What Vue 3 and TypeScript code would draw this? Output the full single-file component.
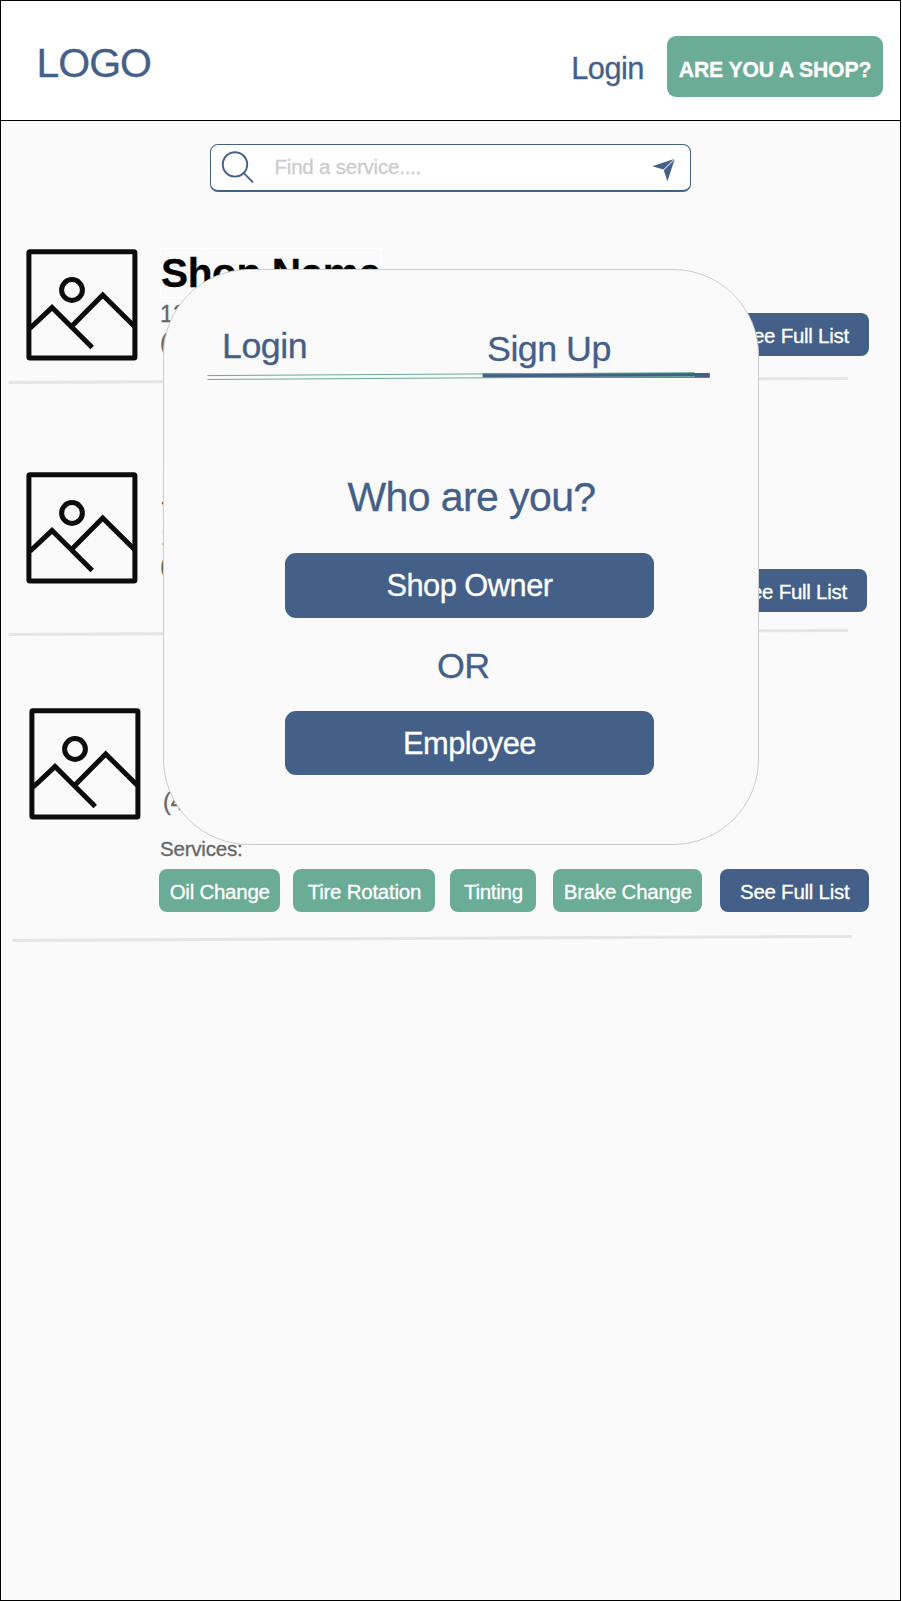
<script setup lang="ts">
interface Shop {
  id: string
  name: string
  address: string
  phone: string
  services: string[]
  listInHeader: boolean
}

const shops: Shop[] = [
  { id: 'first', name: 'Shop Name', address: '123 Main St', phone: '(408)', services: [], listInHeader: true },
  { id: 'second', name: 'Shop Name', address: '123 Main St', phone: '(408)', services: [], listInHeader: true },
  {
    id: 'third',
    name: 'Shop Name',
    address: '123 Main St',
    phone: '(408)',
    services: ['Oil Change', 'Tire Rotation', 'Tinting', 'Brake Change'],
    listInHeader: false,
  },
]
</script>

<template>
  <div class="page">
    <header class="header">
      <div class="logo">LOGO</div>
      <nav class="nav">
        <a class="nav-login">Login</a>
        <button class="shop-cta">ARE YOU A SHOP?</button>
      </nav>
    </header>

    <div class="search">
      <svg class="search-icon" width="34" height="34" viewBox="0 0 34 34">
        <circle cx="14" cy="14.4" r="12.2" />
        <path d="M22.8 23.2L32 32.4" />
      </svg>
      <span class="placeholder">Find a service....</span>
      <svg class="send-icon" width="24" height="24" viewBox="0 0 24 24">
        <path d="M0.3 8.2L22 1L11.4 11.6Z" />
        <path d="M22.6 1.4L15.4 23.2L11.8 12.2Z" />
      </svg>
    </div>

    <main class="list">
      <section v-for="shop in shops" :key="shop.id" class="shop" :class="shop.id">
        <div class="body">
          <svg class="thumb" width="112" height="112" viewBox="0 0 112 112">
            <rect x="2.9" y="2.7" width="106" height="106.3" rx="1" />
            <circle cx="46" cy="41" r="10.4" />
            <path d="M4 79.3L26 58.6L66.2 98.6" />
            <path d="M46 77L76.7 46L109 78" />
          </svg>
          <div class="info">
            <h2 class="name">{{ shop.name }}</h2>
            <p class="line address">{{ shop.address }}</p>
            <p class="line">{{ shop.phone }}</p>
            <template v-if="shop.services.length">
              <p class="services-label">Services:</p>
              <div class="services">
                <span v-for="(service, i) in shop.services" :key="service" class="chip" :class="'chip-' + i">{{ service }}</span>
                <button class="full-list">See Full List</button>
              </div>
            </template>
          </div>
          <button v-if="shop.listInHeader" class="full-list aside">See Full List</button>
        </div>
        <svg class="divider" width="840" height="8" viewBox="0 0 840 8">
          <path d="M0.5 5.4L840 1.4" />
        </svg>
      </section>
    </main>

    <div class="modal">
      <div class="tabs">
        <span class="tab">Login</span>
        <span class="tab active">Sign Up</span>
      </div>
      <svg class="tab-lines" width="504" height="10" viewBox="0 0 504 10">
        <rect class="marker" x="275.6" y="2" width="227.2" height="4.8" />
        <path class="rail" d="M0.5 4.6L487.8 1.6" />
        <path class="rail" d="M0.5 8.5L487.8 5.5" />
      </svg>
      <h1 class="question">Who are you?</h1>
      <button class="choice">Shop Owner</button>
      <div class="or">OR</div>
      <button class="choice">Employee</button>
    </div>
  </div>
</template>

<style>
body {
  margin: 0;
  background: #fff;
}
</style>

<style scoped>
.page {
  position: relative;
  box-sizing: border-box;
  width: 901px;
  height: 1601px;
  border: 1px solid #000;
  background: #fafafa;
  font-family: "Liberation Sans", Arial, sans-serif;
  -webkit-text-stroke: 0.3px currentColor;
  overflow: hidden;
}

button {
  display: block;
  padding: 0;
  border: 0;
  font-family: inherit;
  color: #fff;
  white-space: nowrap;
  -webkit-text-stroke: 0.3px currentColor;
}

.header {
  display: flex;
  justify-content: space-between;
  box-sizing: border-box;
  height: 120px;
  padding: 35px 17px 0 35.5px;
  border-bottom: 1px solid #000;
  background: #fff;
  color: #446088;
}

.logo {
  font-size: 41px;
  line-height: 54px;
  letter-spacing: -1px;
}

.nav {
  display: flex;
  gap: 23px;
}

.nav-login {
  font-size: 30.8px;
  line-height: 66px;
  letter-spacing: -0.5px;
}

.shop-cta {
  width: 216px;
  height: 61px;
  padding-top: 6px;
  border-radius: 9px;
  background: #6aac96;
  font-size: 21.2px;
  font-weight: 700;
  letter-spacing: -0.15px;
}

.search {
  display: flex;
  box-sizing: border-box;
  width: 481px;
  height: 48px;
  margin: 23px 0 0 209px;
  padding: 0 14px 0 10px;
  border: 1px solid #446088;
  border-bottom-width: 2px;
  border-radius: 8px;
  background: #fff;
}

.search-icon {
  margin-top: 5px;
  fill: none;
  stroke: #446088;
  stroke-width: 1.9;
}

.placeholder {
  flex: 1;
  margin-left: 19.5px;
  color: #ccc;
  font-size: 20.6px;
  line-height: 44px;
  letter-spacing: -0.25px;
}

.send-icon {
  margin-top: 13px;
  fill: #446088;
}

.list {
  margin-top: 56px;
}

.body {
  display: flex;
}

.thumb {
  flex: none;
  margin: 1px 0 0 25px;
  fill: none;
  stroke: #0c0c0c;
  stroke-width: 5;
}

.info {
  width: 711px;
  margin-left: 22px;
}

.name {
  box-sizing: border-box;
  width: 222px;
  height: 50px;
  margin: 0;
  border: 1px solid #fff;
  color: #000;
  font-size: 40.6px;
  line-height: 49px;
  letter-spacing: -0.4px;
  white-space: nowrap;
}

.line {
  margin: 0;
  padding-top: 1px;
  color: #666;
  font-size: 23.5px;
  line-height: 29px;
}

.address {
  position: relative;
  top: 1px;
}

.second .address {
  padding-left: 1px;
}

.third .address {
  padding-left: 5px;
}

.divider {
  display: block;
  margin-left: 7px;
  fill: none;
  stroke: #e5e5e5;
  stroke-width: 3;
}

.full-list,
.chip {
  flex: none;
  height: 43.4px;
  border-radius: 8px;
  color: #fff;
  font-size: 20.5px;
  line-height: 46px;
  letter-spacing: -0.25px;
  text-align: center;
  white-space: nowrap;
}

.full-list {
  width: 149.5px;
  background: #446088;
}

.aside {
  margin-left: -151.5px;
}

.first .aside {
  margin-top: 65px;
}

.second .aside {
  margin-top: 98px;
  margin-left: -153.5px;
}

.first {
  height: 223px;
}

.first .body {
  height: 129px;
}

.second .body {
  height: 158px;
}

.second {
  height: 236px;
}

.third .body {
  height: 228px;
}

.third .thumb {
  margin-left: 28px;
}

.third .info {
  margin-left: 19px;
}

.third .name,
.third .line {
  margin-left: 3px;
}

.third .divider {
  margin-left: 11px;
}

.services-label {
  margin: 20px 0 0;
  color: #666;
  font-size: 20.6px;
  line-height: 24px;
  letter-spacing: -0.25px;
}

.services {
  display: flex;
  margin: 8px 0 0 -1px;
}

.chip {
  background: #6aac96;
}

.chip-0 {
  width: 121.4px;
  margin-right: 13px;
}

.chip-1 {
  width: 142px;
  margin-right: 15px;
}

.chip-2 {
  width: 86px;
  margin-right: 17px;
}

.chip-3 {
  width: 149px;
  margin-right: 17.6px;
}

.modal {
  position: absolute;
  left: 162px;
  top: 268px;
  display: flex;
  flex-direction: column;
  box-sizing: border-box;
  width: 596px;
  height: 576px;
  border: 1px solid #ccc;
  border-radius: 86px;
  background: #fafafa;
  color: #446088;
}

.tabs {
  display: flex;
  height: 101px;
}

.tab {
  width: 265px;
  padding: 55px 0 0 58px;
  box-sizing: border-box;
  font-size: 35.8px;
  line-height: 42px;
  letter-spacing: -0.5px;
  white-space: nowrap;
}

.active {
  padding-top: 58px;
}

.tab-lines {
  flex: none;
  margin-left: 43px;
}

.marker {
  fill: #446088;
}

.rail {
  fill: none;
  stroke: #6aac96;
  stroke-width: 1;
}

.question {
  margin: 92px 0 0 183.5px;
  font-size: 41px;
  font-weight: 400;
  line-height: 48px;
  letter-spacing: -0.6px;
}

.choice {
  flex: none;
  width: 368.4px;
  height: 64.4px;
  margin: 32.4px 0 0 121.3px;
  padding-top: 1px;
  border-radius: 11px;
  background: #446088;
  font-size: 30.8px;
  letter-spacing: -0.5px;
}

.or {
  margin: 27.2px 0 0 273px;
  font-size: 35.8px;
  line-height: 42px;
  letter-spacing: -0.6px;
}

.or + .choice {
  margin-top: 24px;
}
</style>
